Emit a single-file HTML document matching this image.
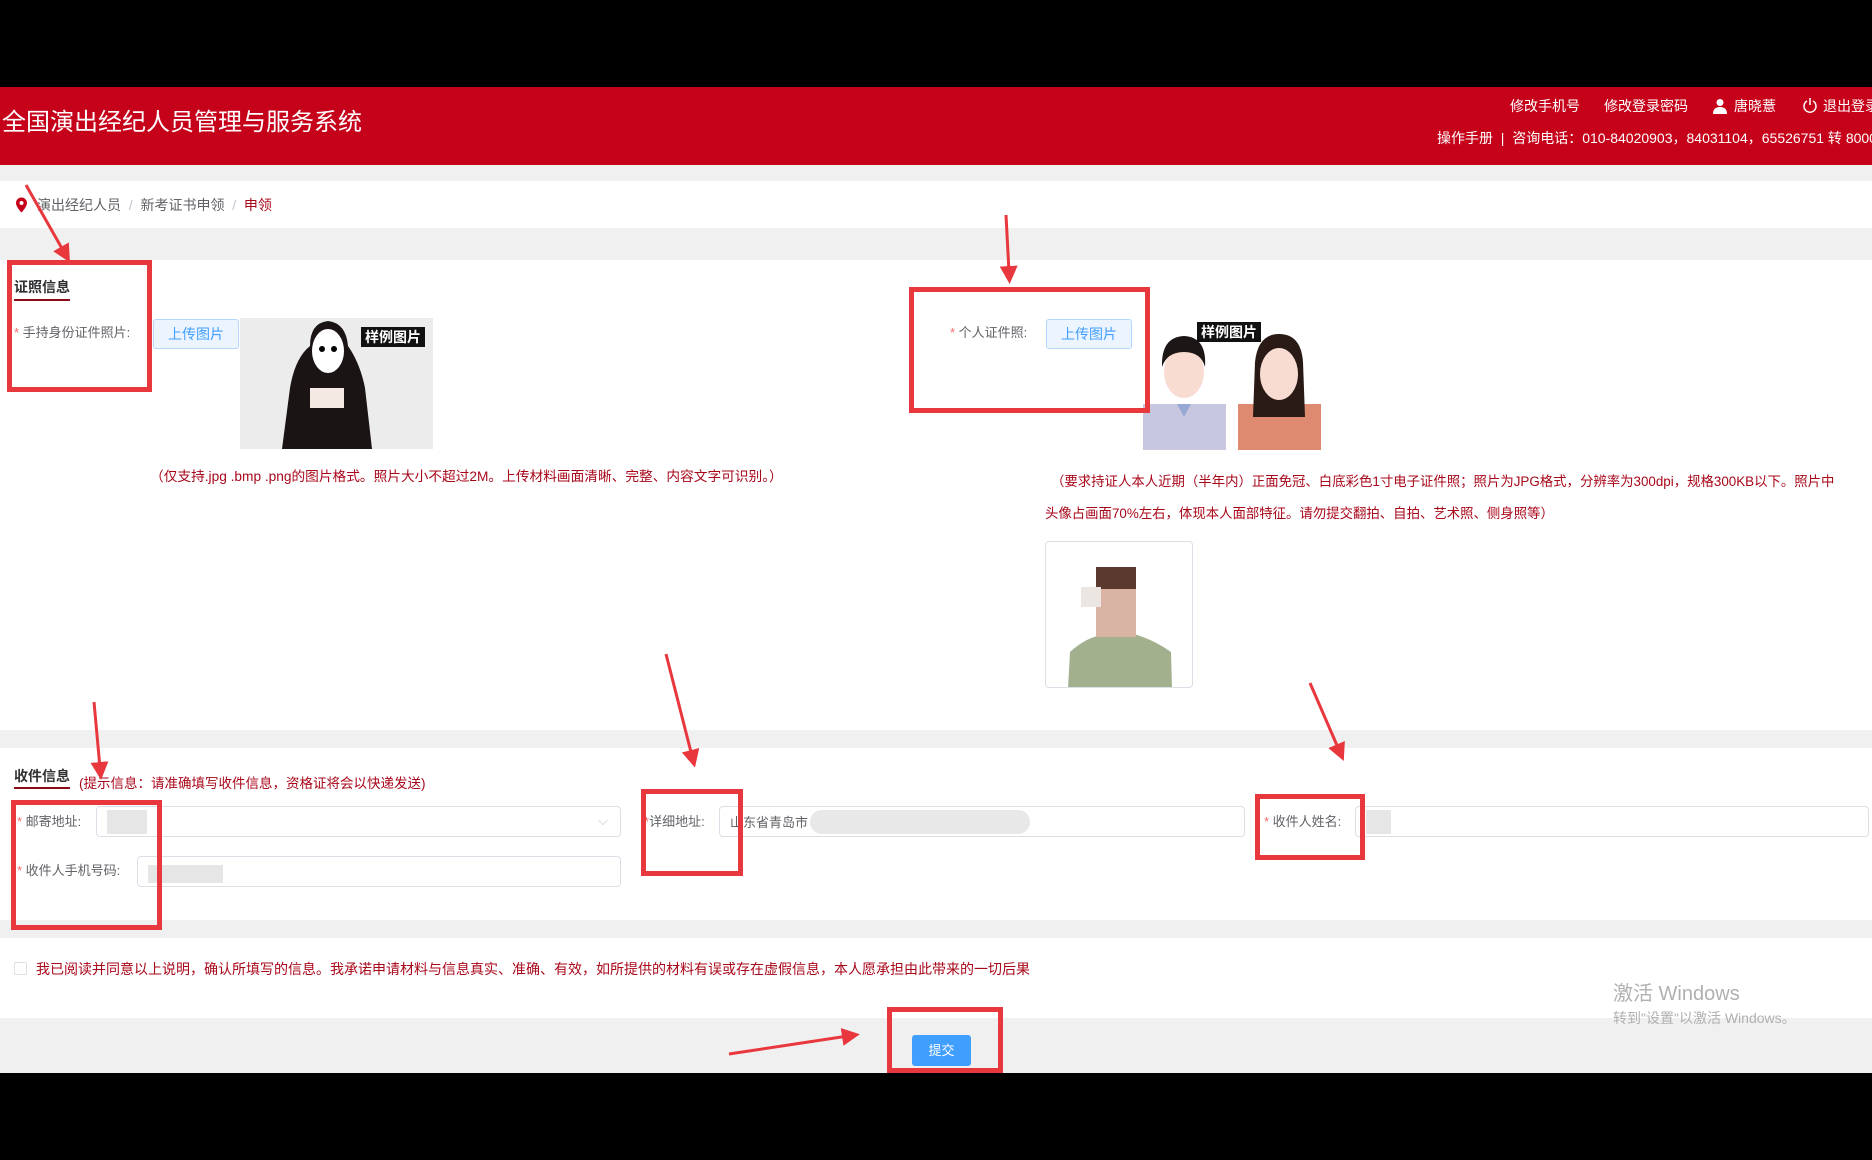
<!DOCTYPE html>
<html><head><meta charset="utf-8">
<style>
*{margin:0;padding:0;box-sizing:border-box}
body{width:1872px;height:1160px;position:relative;overflow:hidden;background:#000;font-family:"Liberation Sans","Noto Sans CJK SC",sans-serif;color:#606266}
.a{position:absolute}
.t{position:absolute;white-space:nowrap;line-height:1}
.box{position:absolute;border:5px solid #e8383d}
.inp{position:absolute;border:1px solid #dcdfe6;border-radius:4px;background:#fff}
.btn{position:absolute;background:#ecf5ff;border:1px solid #b3d8ff;color:#409eff;border-radius:3px;font-size:14px;text-align:center}
.red{color:#a8071a}
.star{color:#f56c6c}
</style></head><body>
<div class="a" style="left:0;top:87px;width:1872px;height:78px;background:#c6011a"></div>
<div class="t" style="left:2px;top:111px;font-size:24px;color:#fff">全国演出经纪人员管理与服务系统</div>
<div class="t" style="left:1510px;top:99px;font-size:14px;color:#fff">修改手机号</div>
<div class="t" style="left:1604px;top:99px;font-size:14px;color:#fff">修改登录密码</div>
<svg class="a" style="left:1712px;top:98px" width="16" height="16" viewBox="0 0 16 16"><circle cx="8" cy="4.5" r="3.5" fill="#fff"/><path d="M1 16 Q1 9 8 9 Q15 9 15 16Z" fill="#fff"/></svg>
<div class="t" style="left:1734px;top:99px;font-size:14px;color:#fff">唐晓薏</div>
<svg class="a" style="left:1802px;top:97px" width="16" height="17" viewBox="0 0 16 17"><path d="M5 4 A6 6 0 1 0 11 4" fill="none" stroke="#fff" stroke-width="1.5"/><line x1="8" y1="1" x2="8" y2="8" stroke="#fff" stroke-width="1.5"/></svg>
<div class="t" style="left:1823px;top:99px;font-size:14px;color:#fff">退出登录</div>
<div class="t" style="left:1437px;top:131px;font-size:14px;color:#fff">操作手册 &nbsp;| &nbsp;咨询电话：010-84020903，84031104，65526751 转 8000</div>
<div class="a" style="left:0;top:165px;width:1872px;height:908px;background:#f0f0f0"></div>
<div class="a" style="left:0;top:181px;width:1872px;height:47px;background:#fff"></div>
<div class="a" style="left:0;top:260px;width:1872px;height:470px;background:#fff"></div>
<div class="a" style="left:0;top:748px;width:1872px;height:172px;background:#fff"></div>
<div class="a" style="left:0;top:938px;width:1872px;height:80px;background:#fff"></div>
<svg class="a" style="left:15px;top:197px" width="13" height="16" viewBox="0 0 13 16"><path d="M6.5 0.5A5.5 5.5 0 0 0 1 6c0 4 5.5 9.5 5.5 9.5S12 10 12 6A5.5 5.5 0 0 0 6.5 0.5z" fill="#c6011a"/><circle cx="6.5" cy="6" r="2" fill="#fff"/></svg>
<div class="t" style="left:37px;top:198px;font-size:14px;color:#606266">演出经纪人员 &nbsp;<span style="color:#c0c4cc">/</span>&nbsp; 新考证书申领 &nbsp;<span style="color:#c0c4cc">/</span>&nbsp; <span style="color:#a8071a">申领</span></div>
<div class="t" style="left:14px;top:280px;font-size:14px;color:#303133;font-weight:bold">证照信息</div>
<div class="a" style="left:14px;top:299px;width:56px;height:2px;background:#8b0a1a"></div>
<div class="t" style="left:14px;top:326px;font-size:13px"><span class="star">*</span> 手持身份证件照片:</div>
<div class="btn" style="left:153px;top:319px;width:86px;height:30px;line-height:28px">上传图片</div>
<svg class="a" style="left:240px;top:318px" width="193" height="131" viewBox="0 0 193 131">
<rect width="193" height="131" fill="#ececec"/>
<path d="M42 131 L50 70 Q55 40 70 28 Q70 5 88 3 Q106 5 108 28 Q120 45 125 70 L132 131Z" fill="#1a1414"/>
<ellipse cx="88" cy="33" rx="16" ry="22" fill="#fff"/>
<circle cx="82" cy="31" r="3" fill="#000"/><circle cx="94" cy="31" r="3" fill="#000"/>
<rect x="70" y="70" width="34" height="20" fill="#f4e9e3"/>
<rect x="121" y="9" width="64" height="20" fill="#111"/>
<text x="153" y="24" font-size="14" fill="#fff" text-anchor="middle" font-weight="bold" font-family="Noto Sans CJK SC">样例图片</text>
</svg>
<div class="t red" style="left:150px;top:470px;font-size:13.7px">（仅支持.jpg .bmp .png的图片格式。照片大小不超过2M。上传材料画面清晰、完整、内容文字可识别。）</div>
<div class="t" style="left:950px;top:326px;font-size:13px"><span class="star">*</span> 个人证件照:</div>
<div class="btn" style="left:1046px;top:319px;width:86px;height:30px;line-height:28px">上传图片</div>
<svg class="a" style="left:1143px;top:322px" width="178" height="128" viewBox="0 0 178 128">
<rect x="0" y="82" width="83" height="46" fill="#c7c8df"/>
<rect x="95" y="82" width="83" height="46" fill="#dd8a70"/>
<path d="M34 82 L41 95 L48 82Z" fill="#97a8d4"/><path d="M129 82 L136 95 L143 82Z" fill="#97a8d4"/>
<ellipse cx="41" cy="50" rx="20" ry="26" fill="#f8dcd1"/>
<path d="M19 45 Q18 15 41 14 Q64 15 62 45 Q58 30 41 30 Q24 30 19 45Z" fill="#1c1616"/>
<path d="M110 95 L112 40 Q115 12 136 12 Q158 12 160 40 L162 95Z" fill="#2a1a16"/>
<ellipse cx="136" cy="52" rx="19" ry="26" fill="#f8dcd1"/>
<rect x="54" y="0" width="64" height="20" fill="#111"/>
<text x="86" y="15" font-size="14" fill="#fff" text-anchor="middle" font-weight="bold" font-family="Noto Sans CJK SC">样例图片</text>
</svg>
<div class="t red" style="left:1051px;top:475px;font-size:13.4px">（要求持证人本人近期（半年内）正面免冠、白底彩色1寸电子证件照；照片为JPG格式，分辨率为300dpi，规格300KB以下。照片中</div>
<div class="t red" style="left:1045px;top:507px;font-size:13.4px">头像占画面70%左右，体现本人面部特征。请勿提交翻拍、自拍、艺术照、侧身照等）</div>
<div class="a" style="left:1045px;top:541px;width:148px;height:147px;border:1px solid #dcdfe6;border-radius:4px;background:#fff;overflow:hidden">
<svg width="148" height="147" viewBox="0 0 148 147"><path d="M22 147 L24 110 Q40 95 60 92 L88 92 Q108 98 125 110 L126 147Z" fill="#a3b08e"/><rect x="50" y="25" width="40" height="70" fill="#d9b3a3"/><rect x="50" y="25" width="40" height="22" fill="#5a3a2e"/><rect x="35" y="45" width="20" height="20" fill="#ece6e2"/></svg></div>
<div class="t" style="left:14px;top:769px;font-size:14px;color:#303133;font-weight:bold">收件信息</div>
<div class="a" style="left:14px;top:787px;width:56px;height:2px;background:#8b0a1a"></div>
<div class="t red" style="left:79px;top:777px;font-size:13.5px">(提示信息：请准确填写收件信息，资格证将会以快递发送)</div>
<div class="t" style="left:17px;top:815px;font-size:13px"><span class="star">*</span> 邮寄地址:</div>
<div class="inp" style="left:96px;top:806px;width:525px;height:31px"><span class="a" style="right:12px;top:6px;color:#c0c4cc;font-size:13px">⌵</span><span class="a" style="left:10px;top:3px;width:40px;height:24px;background:#e6e6e6"></span></div>
<div class="t" style="left:644px;top:815px;font-size:13px"><span class="star">*</span>详细地址:</div>
<div class="inp" style="left:719px;top:806px;width:526px;height:31px"><span class="t" style="left:10px;top:9px;font-size:13px;color:#606266">山东省青岛市</span><span class="a" style="left:90px;top:3px;width:220px;height:24px;background:#e8e8e8;border-radius:12px"></span></div>
<div class="t" style="left:1264px;top:815px;font-size:13px"><span class="star">*</span> 收件人姓名:</div>
<div class="inp" style="left:1355px;top:806px;width:514px;height:31px"><span class="a" style="left:10px;top:3px;width:25px;height:24px;background:#e6e6e6"></span></div>
<div class="t" style="left:17px;top:864px;font-size:13px"><span class="star">*</span> 收件人手机号码:</div>
<div class="inp" style="left:137px;top:856px;width:484px;height:31px"><span class="a" style="left:10px;top:8px;width:75px;height:18px;background:#e6e6e6"></span></div>
<div class="a" style="left:14px;top:962px;width:13px;height:13px;border:1px solid #dcdfe6;border-radius:2px;background:#fff"></div>
<div class="t red" style="left:36px;top:962px;font-size:14px">我已阅读并同意以上说明，确认所填写的信息。我承诺申请材料与信息真实、准确、有效，如所提供的材料有误或存在虚假信息，本人愿承担由此带来的一切后果</div>
<div class="a" style="left:912px;top:1035px;width:59px;height:31px;background:#409eff;border-radius:3px;color:#fff;font-size:13px;text-align:center;line-height:31px">提交</div>
<div class="t" style="left:1613px;top:984px;font-size:20px;color:#b0b0b0">激活 Windows</div>
<div class="t" style="left:1613px;top:1011px;font-size:14px;color:#b0b0b0">转到"设置"以激活 Windows。</div>
<div class="box" style="left:7px;top:260px;width:145px;height:132px"></div>
<div class="box" style="left:909px;top:287px;width:241px;height:126px"></div>
<div class="box" style="left:11px;top:800px;width:151px;height:130px"></div>
<div class="box" style="left:641px;top:789px;width:102px;height:87px"></div>
<div class="box" style="left:1255px;top:794px;width:110px;height:66px"></div>
<div class="box" style="left:887px;top:1007px;width:116px;height:66px"></div>
<svg class="a" style="left:0;top:0" width="1872" height="1160">
<defs><marker id="h" markerWidth="6" markerHeight="6" refX="2" refY="3" orient="auto"><path d="M0 0 L6 3 L0 6Z" fill="#e8383d"/></marker></defs>
<g stroke="#e8383d" stroke-width="3" marker-end="url(#h)">
<line x1="26" y1="185" x2="64" y2="252"/>
<line x1="1006" y1="215" x2="1009" y2="272"/>
<line x1="94" y1="702" x2="100" y2="768"/>
<line x1="666" y1="654" x2="692" y2="756"/>
<line x1="1310" y1="683" x2="1339" y2="750"/>
<line x1="729" y1="1054" x2="848" y2="1036"/>
</g></svg>
</body></html>
